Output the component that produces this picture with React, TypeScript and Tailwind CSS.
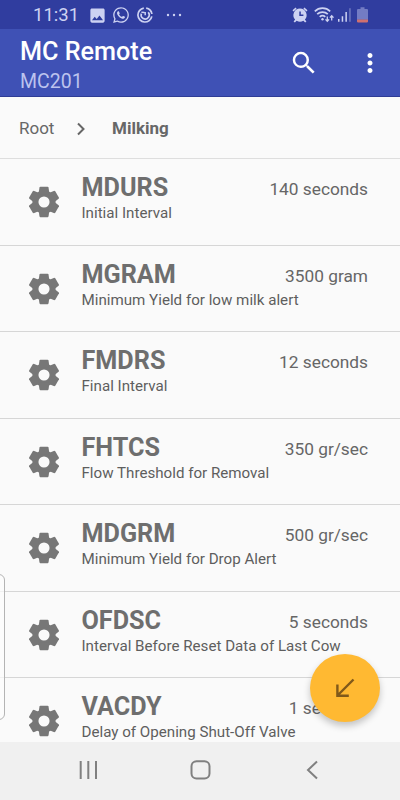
import React from 'react';
import { MdImage, MdMoreVert, MdSearch } from 'react-icons/md';
import { FaWhatsapp } from 'react-icons/fa';

interface Parameter {
  code: string;
  description: string;
  value: string;
}

const parameters: Parameter[] = [
  { code: 'MDURS', description: 'Initial Interval', value: '140 seconds' },
  { code: 'MGRAM', description: 'Minimum Yield for low milk alert', value: '3500 gram' },
  { code: 'FMDRS', description: 'Final Interval', value: '12 seconds' },
  { code: 'FHTCS', description: 'Flow Threshold for Removal', value: '350 gr/sec' },
  { code: 'MDGRM', description: 'Minimum Yield for Drop Alert', value: '500 gr/sec' },
  { code: 'OFDSC', description: 'Interval Before Reset Data of Last Cow', value: '5 seconds' },
  { code: 'VACDY', description: 'Delay of Opening Shut-Off Valve', value: '1 seconds' },
];

const teeth = [0, 60, 120, 180, 240, 300];

const GearIcon: React.FC = () => (
  <svg viewBox="0 0 24 24" className="h-9 w-9 shrink-0" fill="#777">
    <circle cx="12" cy="12" r="5.7" fill="none" stroke="#777" strokeWidth="4" />
    {teeth.map((angle) => (
      <path key={angle} d="M9.5 1.9h5l.5.4.7 4.7H8.3L9 2.3z" transform={`rotate(${angle} 12 12)`} />
    ))}
  </svg>
);

const StatusBar: React.FC = () => (
  <div className="flex h-[29px] shrink-0 items-center bg-[#303d9f] pt-px pl-[33px] pr-8 text-[#cdd2f2]">
    <span className="w-[55px] pt-px text-[18.5px] leading-none whitespace-nowrap">11:31</span>
    <MdImage className="h-[19px] w-[19px]" />
    <FaWhatsapp className="ml-[5px] h-[18px] w-[18px]" />
    <svg viewBox="0 0 16 16" className="ml-[7px] h-4 w-4" fill="none" stroke="currentColor" strokeWidth="1.7">
      <path d="M9.2 1.1A7 7 0 0 1 14.9 7M14.8 9.3A7 7 0 1 1 6.8 1.1" />
      <path d="M4.4 6.6a4 4 0 1 0 6.8-1.3" />
      <path d="M4.4 5.2l3 .4M8.2 5v3.2" strokeWidth="1.5" />
    </svg>
    <svg viewBox="0 0 16 4" className="ml-[13px] h-1 w-4" fill="currentColor">
      <circle cx="2" cy="2" r="1.2" />
      <circle cx="8" cy="2" r="1.2" />
      <circle cx="14" cy="2" r="1.2" />
    </svg>
    <svg viewBox="0 0 16 16" className="ml-auto h-4 w-4" fill="currentColor">
      <path d="M3.6.6l1 1.2L1.5 4.4.5 3.2zM12.4.6l-1 1.2 3.1 2.6 1-1.2z" />
      <path
        fillRule="evenodd"
        d="M8 1.6a6.6 6.6 0 0 1 4.9 11l1.5 1.9-1.3 1.1-1.7-1.9a6.6 6.6 0 0 1-6.8 0l-1.7 1.9-1.3-1.1 1.5-1.9A6.6 6.6 0 0 1 8 1.6zM7.3 4.6v4.5h4.1V7.6H8.8v-3z"
      />
    </svg>
    <svg viewBox="0 0 20 16" className="ml-1.5 h-4 w-5" fill="none" stroke="currentColor" strokeWidth="1.7">
      <path d="M.8 4.3a11 11 0 0 1 15.4 0M3.2 7.2a7.6 7.6 0 0 1 10.6 0M5.7 9.9a4.3 4.3 0 0 1 5.6 0" />
      <circle cx="8.5" cy="12.3" r="1.2" fill="currentColor" stroke="none" />
      <path d="M13.3 9.5v4.8M11.5 12.4l1.8 1.9 1.8-1.9M17.7 13.5V8.7M15.9 10.6l1.8-1.9 1.8 1.9" strokeWidth="1.3" />
    </svg>
    <svg viewBox="0 0 14 16" className="ml-1 h-4 w-3.5" fill="currentColor">
      <path d="M0 12h1.5v2.7H0zM3.7 9.3h1.5v5.4H3.7zM7.4 5h1.5v9.7H7.4z" />
      <path d="M11.2 1.3h1.5v13.4h-1.5z" opacity=".4" />
    </svg>
    <svg viewBox="0 0 11 16" className="ml-[5px] h-4 w-[11px]">
      <path d="M3.5.3h4v1.8H10c.6 0 1 .3 1 .9v9.8H0V3c0-.6.4-.9 1-.9h2.5z" fill="#737cc4" />
      <path d="M0 12.6h11v2a.8.8 0 0 1-.8.8H.8a.8.8 0 0 1-.8-.8z" fill="#d0706f" />
    </svg>
  </div>
);

const App: React.FC = () => {
  return (
    <div className="relative flex h-[800px] w-[400px] flex-col overflow-hidden bg-[#fafafa] font-[Roboto,sans-serif]">
      <StatusBar />

      <header className="flex h-[68px] shrink-0 items-center border-b border-[#2f3d95] bg-[#3f51b5] pl-5 text-white">
        <div className="flex flex-col pt-[7px]">
          <h1 className="text-[25.2px] leading-[30px] font-medium whitespace-nowrap">MC Remote</h1>
          <span className="text-[19.5px] leading-[29px] text-[#bcc3ee]">MC201</span>
        </div>
        <MdSearch className="mr-9 ml-auto h-[30px] w-[30px]" />
        <MdMoreVert className="mr-[15px] h-[30px] w-[30px]" />
      </header>

      <nav className="flex h-[62px] shrink-0 items-center border-b border-[#dedede] pt-0.5 pl-[19px] text-[17px] text-[#676767]">
        <span className="w-[57px]">Root</span>
        <svg viewBox="0 0 10 14" className="h-3.5 w-2.5" fill="none" stroke="#666" strokeWidth="2">
          <path d="M2 1.5L7.5 7 2 12.5" />
        </svg>
        <span className="ml-[26px] font-bold">Milking</span>
      </nav>

      <main className="min-h-0 flex-1 overflow-hidden">
        {parameters.map((param) => (
          <div key={param.code} className="flex h-[86.5px] border-b border-[#d6d6d6] pr-8 pl-[26px]">
            <div className="flex h-full w-[55.5px] shrink-0 items-center pt-px">
              <GearIcon />
            </div>
            <div className="flex-1 pt-[15px]">
              <div className="flex items-start justify-between">
                <h2 className="text-[25.2px] leading-7 font-bold text-[#6e6e6e]">{param.code}</h2>
                <span className="pt-px text-[17.3px] leading-7 text-[#666]">{param.value}</span>
              </div>
              <p className="-mt-0.5 text-[15.15px] leading-6 whitespace-nowrap text-[#5e5e5e]">{param.description}</p>
            </div>
          </div>
        ))}
      </main>

      <footer className="flex h-[58px] shrink-0 items-center bg-[#f0f0f0] pb-0.5 pl-[79px] text-[#808080]">
        <svg viewBox="0 0 18 20" className="h-5 w-[18px]" fill="none" stroke="currentColor" strokeWidth="2">
          <path d="M1.7 1v18M9.3 1v18M17 1v18" />
        </svg>
        <svg viewBox="0 0 22 20" className="ml-[93px] h-5 w-[22px]" fill="none" stroke="currentColor" strokeWidth="2">
          <rect x="1.5" y="1.2" width="18" height="17.4" rx="5" />
        </svg>
        <svg viewBox="0 0 12 20" className="ml-[94px] h-5 w-3" fill="none" stroke="currentColor" strokeWidth="2">
          <path d="M11 1.5L2 10l9 8.5" />
        </svg>
      </footer>

      {/* edge panel handle */}
      <div className="absolute top-[574px] -left-1 h-[146px] w-[9px] rounded-r-md border border-[#b4b4b4] bg-[#fcfcfc]/70" />

      <button className="absolute top-[654px] left-[310px] flex h-[68px] w-[70px] items-center justify-center rounded-[50%] bg-[#ffb932] shadow-[0_4px_7px_rgba(0,0,0,0.22)]">
        <svg viewBox="0 0 20 20" className="h-5 w-5" fill="none" stroke="#80591a" strokeWidth="2.4">
          <path d="M18.5 1.5L2.5 17.5M2.4 6.5v11.2h11.4" />
        </svg>
      </button>
    </div>
  );
};

export default App;
